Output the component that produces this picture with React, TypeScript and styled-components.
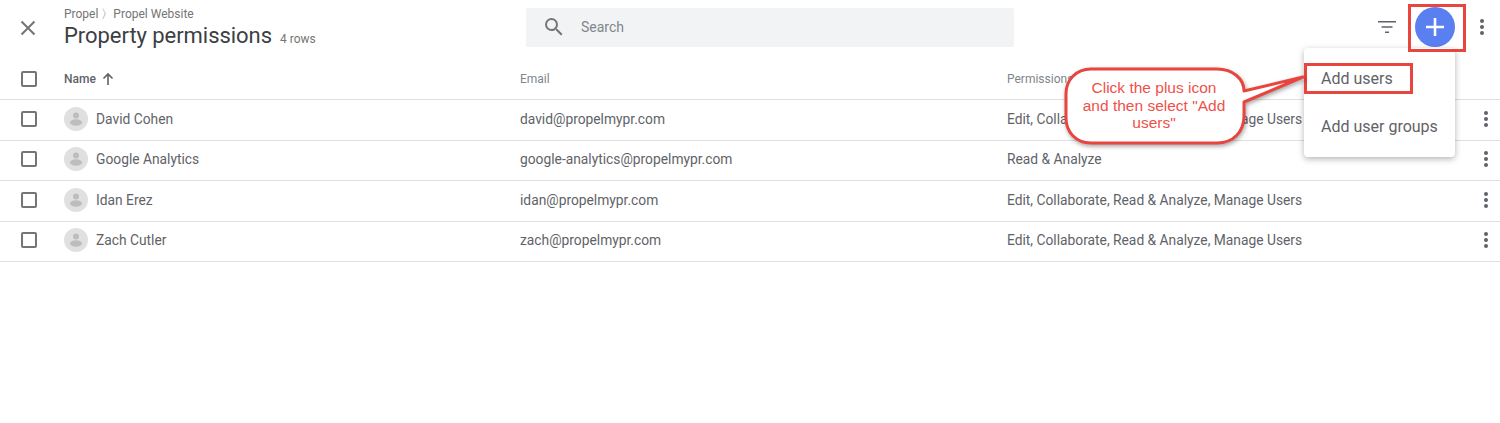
import styled, { createGlobalStyle } from 'styled-components';

const Global = createGlobalStyle`
  html, body { margin: 0; padding: 0; background: #fff; }
  body { font-family: Roboto, "Liberation Sans", sans-serif; overflow: hidden; }
`;

const Page = styled.div`
  position: relative;
  width: 1500px;
  height: 423px;
  overflow: hidden;
`;

const Header = styled.header`
  display: flex;
  align-items: center;
  height: 59px;
  box-sizing: border-box;
`;

const CloseCell = styled.div`
  width: 64px;
  padding: 0 0 4px 17px;
  box-sizing: border-box;
  display: flex;
  align-items: center;
  height: 55px;
  color: #757575;
`;

const TitleBlock = styled.div`
  width: 462px;
  height: 59px;
  padding-top: 7px;
  box-sizing: border-box;
`;

const Crumbs = styled.div`
  font-size: 12px;
  line-height: 14px;
  color: #757575;
`;

const TitleRow = styled.div`
  display: flex;
  align-items: baseline;
  margin-top: 1px;
  gap: 8px;
`;

const Title = styled.h1`
  margin: 0;
  font-size: 22px;
  line-height: 28px;
  font-weight: 400;
  letter-spacing: -0.05px;
  color: #3c4043;
`;

const RowCount = styled.span`
  font-size: 12px;
  color: #757575;
`;

const Search = styled.div`
  width: 488px;
  height: 39px;
  margin-top: -4px;
  background: #f1f3f4;
  border-radius: 2px;
  display: flex;
  align-items: center;
  padding: 0 0 1px 16px;
  box-sizing: border-box;
  gap: 15px;
  font-size: 14px;
  color: #80868b;
`;

const Actions = styled.div`
  margin: -5px 0 0 363px;
  display: flex;
  align-items: center;
  height: 55px;
  color: #5f6368;
`;

const FabButton = styled.div`
  width: 40px;
  height: 40px;
  margin-left: 18px;
  border-radius: 50%;
  background: #5a7ff0;
  display: flex;
  align-items: center;
  justify-content: center;
`;

const Row = styled.div<{ $height: number; $lift: number }>`
  display: grid;
  grid-template-columns: 64px 456px 487px 1fr 36px;
  align-items: center;
  height: ${({ $height }) => $height}px;
  padding-bottom: ${({ $lift }) => $lift}px;
  box-sizing: border-box;
  border-bottom: 1px solid #e0e0e0;
  font-size: 13.8px;
  color: #5f6368;
`;

const CheckCell = styled.div`
  padding-left: 21px;
  display: flex;
`;

const Checkbox = styled.span`
  width: 16px;
  height: 16px;
  box-sizing: border-box;
  border: 2px solid #757575;
  border-radius: 2px;
`;

const HeadName = styled.div`
  display: flex;
  align-items: center;
  gap: 5px;
  font-size: 12px;
  font-weight: 500;
  color: #5f6368;
`;

const HeadLabel = styled.div`
  font-size: 12px;
  color: #80868b;
`;

const NameCell = styled.div`
  display: flex;
  align-items: center;
  gap: 8px;
`;

const Avatar = styled.svg`
  width: 24px;
  height: 24px;
  display: block;
`;

const RowMenu = styled.div`
  display: flex;
  padding-left: 20px;
  color: #5f6368;
`;

const HeaderMenu = styled.div`
  display: flex;
  padding-left: 25px;
  color: #5f6368;
`;

const Menu = styled.div`
  position: absolute;
  left: 1304px;
  top: 48px;
  width: 151px;
  height: 109px;
  background: #fff;
  border-radius: 4px;
  box-shadow: 0 2px 6px rgba(0, 0, 0, 0.3);
  padding-top: 7px;
  box-sizing: border-box;
`;

const MenuItem = styled.div`
  height: 47.5px;
  padding-left: 17px;
  display: flex;
  align-items: center;
  font-size: 16px;
  color: #5f6368;
`;

const RedBox = styled.div<{ $l: number; $t: number; $w: number; $h: number }>`
  position: absolute;
  left: ${({ $l }) => $l}px;
  top: ${({ $t }) => $t}px;
  width: ${({ $w }) => $w}px;
  height: ${({ $h }) => $h}px;
  box-sizing: border-box;
  border: 3px solid #e8453f;
`;

const Callout = styled.div`
  position: absolute;
  left: 1060px;
  top: 62px;
  width: 250px;
  height: 90px;
`;

const CalloutShape = styled.svg`
  position: absolute;
  inset: 0;
  overflow: visible;
  filter: drop-shadow(1px 2px 2px rgba(0, 0, 0, 0.35));
`;

const CalloutText = styled.div`
  position: absolute;
  left: 20px;
  top: 17px;
  width: 148px;
  font-family: "Liberation Sans", Arial, sans-serif;
  font-size: 15.5px;
  line-height: 17.5px;
  text-align: center;
  color: #f0504a;
`;

const Dots = () => (
  <svg width="4" height="16" viewBox="0 0 4 16" fill="currentColor">
    <circle cx="2" cy="2" r="2" />
    <circle cx="2" cy="8" r="2" />
    <circle cx="2" cy="14" r="2" />
  </svg>
);

const people = [
  { name: 'David Cohen', email: 'david@propelmypr.com', perms: 'Edit, Collaborate, Read & Analyze, Manage Users', h: 41 },
  { name: 'Google Analytics', email: 'google-analytics@propelmypr.com', perms: 'Read & Analyze', h: 40 },
  { name: 'Idan Erez', email: 'idan@propelmypr.com', perms: 'Edit, Collaborate, Read & Analyze, Manage Users', h: 41 },
  { name: 'Zach Cutler', email: 'zach@propelmypr.com', perms: 'Edit, Collaborate, Read & Analyze, Manage Users', h: 40 },
];

export default function App() {
  return (
    <Page>
      <Global />
      <Header>
        <CloseCell>
          <svg width="22" height="22" viewBox="0 0 22 22" stroke="currentColor" strokeWidth="2" fill="none">
            <path d="M4.5 4.5l13 13M17.5 4.5l-13 13" />
          </svg>
        </CloseCell>
        <TitleBlock>
          <Crumbs>Propel 〉Propel Website</Crumbs>
          <TitleRow>
            <Title>Property permissions</Title>
            <RowCount>4 rows</RowCount>
          </TitleRow>
        </TitleBlock>
        <Search>
          <svg width="24" height="24" viewBox="0 0 24 24" fill="#757575">
            <path d="M15.5 14h-.79l-.28-.27A6.47 6.47 0 0 0 16 9.5 6.5 6.5 0 1 0 9.5 16c1.61 0 3.09-.59 4.23-1.57l.27.28v.79l5 4.99L20.49 19l-4.99-5zm-6 0C7.01 14 5 11.99 5 9.5S7.01 5 9.5 5 14 7.01 14 9.5 11.99 14 9.5 14z" />
          </svg>
          Search
        </Search>
        <Actions>
          <svg width="20" height="20" viewBox="0 0 20 20" fill="currentColor">
            <path d="M1 4h18v1.6H1zM4.5 9.2h11v1.6h-11zM8 14.4h4V16H8z" />
          </svg>
          <FabButton>
            <svg width="22" height="22" viewBox="0 0 22 22" fill="#fff">
              <path d="M9.7 2h2.6v7.7H20v2.6h-7.7V20H9.7v-7.7H2V9.7h7.7z" />
            </svg>
          </FabButton>
          <HeaderMenu>
            <Dots />
          </HeaderMenu>
        </Actions>
      </Header>

      <Row $height={41} $lift={0}>
        <CheckCell><Checkbox /></CheckCell>
        <HeadName>
          Name
          <svg width="14" height="14" viewBox="0 0 14 14" fill="none" stroke="#5f6368" strokeWidth="1.6">
            <path d="M7 13V2M2.5 6.5L7 2l4.5 4.5" />
          </svg>
        </HeadName>
        <HeadLabel>Email</HeadLabel>
        <HeadLabel>Permissions</HeadLabel>
        <div />
      </Row>

      {people.map((p) => (
        <Row $height={p.h} $lift={p.h === 40 ? 3 : 2} key={p.email}>
          <CheckCell><Checkbox /></CheckCell>
          <NameCell>
            <Avatar viewBox="0 0 24 24">
              <circle cx="12" cy="12" r="12" fill="#e0e0e0" />
              <circle cx="12" cy="8.5" r="3" fill="#bdbdbd" />
              <ellipse cx="12" cy="15.5" rx="6" ry="3.2" fill="#bdbdbd" />
            </Avatar>
            {p.name}
          </NameCell>
          <div>{p.email}</div>
          <div>{p.perms}</div>
          <RowMenu><Dots /></RowMenu>
        </Row>
      ))}

      <Menu>
        <MenuItem>Add users</MenuItem>
        <MenuItem>Add user groups</MenuItem>
      </Menu>
      <RedBox $l={1304} $t={63} $w={109} $h={31} />
      <RedBox $l={1408} $t={4} $w={58} $h={48} />

      <Callout>
        <CalloutShape width="250" height="90" viewBox="0 0 250 90">
          <path
            d="M31 7H157C173 7 184 17 184 29L243 15L184 40V54C184 70 173 81 157 81H31C16 81 6 70 6 56V32C6 18 16 7 31 7Z"
            fill="#fff"
            stroke="#e8453f"
            strokeWidth="3"
            strokeLinejoin="round"
          />
        </CalloutShape>
        <CalloutText>
          Click the plus icon and then select "Add users"
        </CalloutText>
      </Callout>
    </Page>
  );
}
